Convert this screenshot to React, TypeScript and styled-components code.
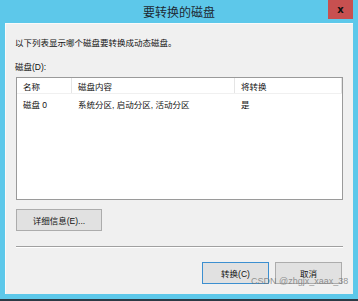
import React from "react";
import styled, { createGlobalStyle } from "styled-components";

const Global = createGlobalStyle`
  html, body { margin: 0; padding: 0; background: #2c3a45; }
  body { font-family: "Liberation Sans", "Noto Sans CJK SC", sans-serif; }
`;

const Win = styled.div`
  position: relative;
  width: 358px;
  height: 299px;
  background: #5dc8ea;
  display: flex;
  flex-direction: column;
  box-sizing: border-box;
`;

const TitleBar = styled.div`
  position: relative;
  height: 23px;
  display: flex;
  align-items: center;
  justify-content: center;
  font-size: 12px;
  color: #1e2a33;
  font-family: "Noto Sans CJK SC", sans-serif;
`;

const Close = styled.div`
  position: absolute;
  top: 0;
  right: 5px;
  width: 25px;
  height: 19px;
  background: #c75050;
  display: flex;
  align-items: center;
  justify-content: center;
  color: #111;
  font-family: "DejaVu Sans", sans-serif;
  font-weight: bold;
  font-size: 10px;
`;

const Client = styled.div`
  flex: 1;
  margin: 0 5px 5px 5px;
  background: #f0f0f0;
  padding: 13px 10px 0 10px;
  display: flex;
  flex-direction: column;
  font-size: 8.5px;
  color: #111;
  border-top: 1px solid #fafafa;
  border-left: 1px solid #fafafa;
  box-sizing: border-box;
`;

const Text = styled.div<{ $mt?: number }>`
  line-height: 12px;
  margin-top: ${(p) => p.$mt ?? 0}px;
  margin-left: -1px;
`;

const ListBox = styled.div`
  margin-top: 4px;
  height: 123px;
  background: #fff;
  border: 1px solid #9a9a9a;
  box-sizing: border-box;
`;

const Row = styled.div<{ $head?: boolean }>`
  display: grid;
  grid-template-columns: 55px 163px 107px;
  height: ${(p) => (p.$head ? 15 : 19)}px;
  align-items: center;
  ${(p) => (p.$head ? "border-bottom: 1px solid #f0f0f0;" : "")}
`;

const Cell = styled.div<{ $head?: boolean }>`
  padding-left: 6px;
  height: 100%;
  display: flex;
  align-items: center;
  white-space: pre;
  ${(p) => (p.$head ? "border-right: 1px solid #e5e5e5;" : "")}
`;

const Btn = styled.div<{ $default?: boolean; $w: number }>`
  width: ${(p) => p.$w}px;
  height: 22px;
  box-sizing: border-box;
  border: 1px solid ${(p) => (p.$default ? "#3c8fd0" : "#acacac")};
  background: #e1e1e1;
  display: flex;
  align-items: center;
  justify-content: center;
  font-size: 8.5px;
  color: #111;
`;

const Separator = styled.div`
  margin-top: 15px;
  height: 1px;
  background: #a0a0a0;
  border-bottom: 1px solid #fff;
`;

const Footer = styled.div`
  margin-top: 14px;
  display: flex;
  justify-content: flex-end;
  gap: 6px;
  padding-right: 1px;
`;

const Watermark = styled.div`
  position: absolute;
  left: 251px;
  top: 276px;
  font-size: 9px;
  color: rgba(120, 120, 120, 0.8);
  font-family: "Liberation Sans", sans-serif;
  white-space: nowrap;
`;

export default function App() {
  return (
    <>
      <Global />
      <Win>
        <TitleBar>
          要转换的磁盘
          <Close>x</Close>
        </TitleBar>
        <Client>
          <Text>以下列表显示哪个磁盘要转换成动态磁盘。</Text>
          <Text $mt={12}>磁盘(D):</Text>
          <ListBox>
            <Row $head>
              <Cell $head>名称</Cell>
              <Cell $head>磁盘内容</Cell>
              <Cell $head>将转换</Cell>
            </Row>
            <Row>
              <Cell>磁盘 0</Cell>
              <Cell>系统分区, 启动分区, 活动分区</Cell>
              <Cell>是</Cell>
            </Row>
          </ListBox>
          <div style={{ marginTop: 9 }}>
            <Btn $w={86}>详细信息(E)...</Btn>
          </div>
          <Separator />
          <Footer>
            <Btn $w={67} $default>
              转换(C)
            </Btn>
            <Btn $w={67}>取消</Btn>
          </Footer>
        </Client>
        <Watermark>CSDN @zhgjx_xaax_38</Watermark>
      </Win>
    </>
  );
}
